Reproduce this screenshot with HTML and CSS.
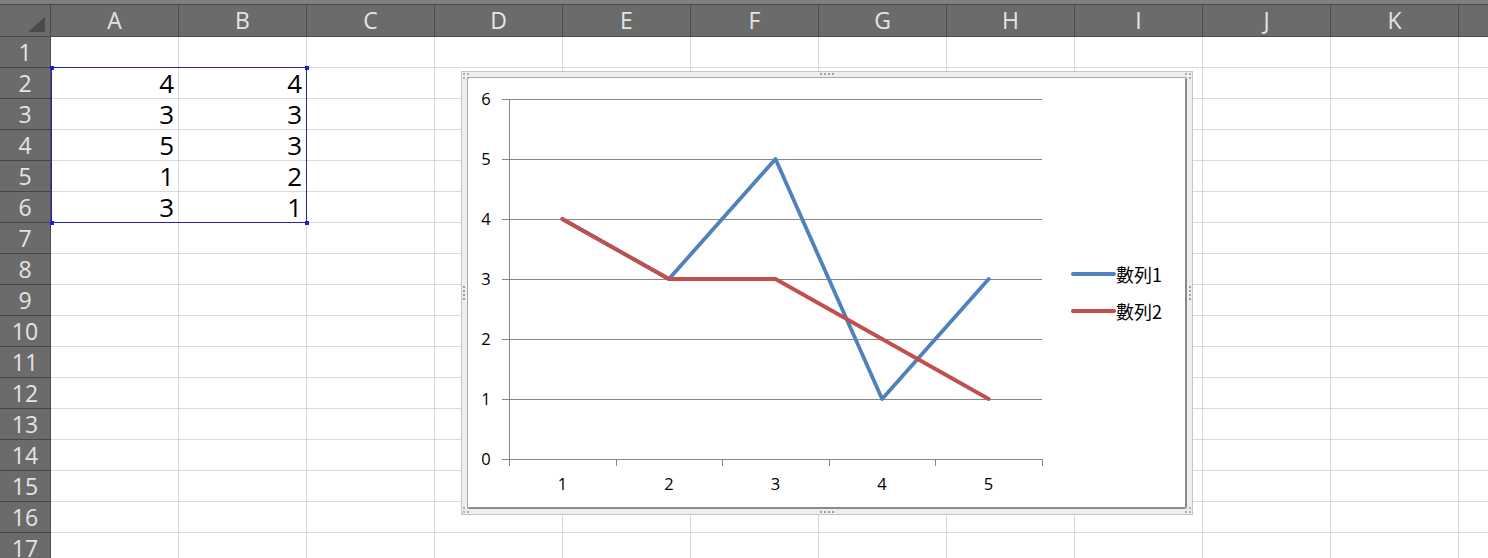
FILE: index.html
```html
<!DOCTYPE html>
<html>
<head>
<meta charset="utf-8">
<link rel="stylesheet" href="styles.css">
</head>
<body>
<div class="app">
  <div class="topstrip"></div>
  <div class="sheet">
    <div class="corner"><svg width="50" height="31" viewBox="0 0 50 31"><polygon points="45,12 45,27 28,27" fill="#4a4a4a"/></svg></div>
    <div class="colh">A</div><div class="colh">B</div><div class="colh">C</div><div class="colh">D</div><div class="colh">E</div><div class="colh">F</div><div class="colh">G</div><div class="colh">H</div><div class="colh">I</div><div class="colh">J</div><div class="colh">K</div><div class="colh">L</div>

    <div class="rowh">1</div><div class="cell"></div><div class="cell"></div><div class="cell"></div><div class="cell"></div><div class="cell"></div><div class="cell"></div><div class="cell"></div><div class="cell"></div><div class="cell"></div><div class="cell"></div><div class="cell"></div><div class="cell"></div>
    <div class="rowh">2</div><div class="cell num">4</div><div class="cell num">4</div><div class="cell"></div><div class="cell"></div><div class="cell"></div><div class="cell"></div><div class="cell"></div><div class="cell"></div><div class="cell"></div><div class="cell"></div><div class="cell"></div><div class="cell"></div>
    <div class="rowh">3</div><div class="cell num">3</div><div class="cell num">3</div><div class="cell"></div><div class="cell"></div><div class="cell"></div><div class="cell"></div><div class="cell"></div><div class="cell"></div><div class="cell"></div><div class="cell"></div><div class="cell"></div><div class="cell"></div>
    <div class="rowh">4</div><div class="cell num">5</div><div class="cell num">3</div><div class="cell"></div><div class="cell"></div><div class="cell"></div><div class="cell"></div><div class="cell"></div><div class="cell"></div><div class="cell"></div><div class="cell"></div><div class="cell"></div><div class="cell"></div>
    <div class="rowh">5</div><div class="cell num">1</div><div class="cell num">2</div><div class="cell"></div><div class="cell"></div><div class="cell"></div><div class="cell"></div><div class="cell"></div><div class="cell"></div><div class="cell"></div><div class="cell"></div><div class="cell"></div><div class="cell"></div>
    <div class="rowh">6</div><div class="cell num">3</div><div class="cell num">1</div><div class="cell"></div><div class="cell"></div><div class="cell"></div><div class="cell"></div><div class="cell"></div><div class="cell"></div><div class="cell"></div><div class="cell"></div><div class="cell"></div><div class="cell"></div>
    <div class="rowh">7</div><div class="cell"></div><div class="cell"></div><div class="cell"></div><div class="cell"></div><div class="cell"></div><div class="cell"></div><div class="cell"></div><div class="cell"></div><div class="cell"></div><div class="cell"></div><div class="cell"></div><div class="cell"></div>
    <div class="rowh">8</div><div class="cell"></div><div class="cell"></div><div class="cell"></div><div class="cell"></div><div class="cell"></div><div class="cell"></div><div class="cell"></div><div class="cell"></div><div class="cell"></div><div class="cell"></div><div class="cell"></div><div class="cell"></div>
    <div class="rowh">9</div><div class="cell"></div><div class="cell"></div><div class="cell"></div><div class="cell"></div><div class="cell"></div><div class="cell"></div><div class="cell"></div><div class="cell"></div><div class="cell"></div><div class="cell"></div><div class="cell"></div><div class="cell"></div>
    <div class="rowh">10</div><div class="cell"></div><div class="cell"></div><div class="cell"></div><div class="cell"></div><div class="cell"></div><div class="cell"></div><div class="cell"></div><div class="cell"></div><div class="cell"></div><div class="cell"></div><div class="cell"></div><div class="cell"></div>
    <div class="rowh">11</div><div class="cell"></div><div class="cell"></div><div class="cell"></div><div class="cell"></div><div class="cell"></div><div class="cell"></div><div class="cell"></div><div class="cell"></div><div class="cell"></div><div class="cell"></div><div class="cell"></div><div class="cell"></div>
    <div class="rowh">12</div><div class="cell"></div><div class="cell"></div><div class="cell"></div><div class="cell"></div><div class="cell"></div><div class="cell"></div><div class="cell"></div><div class="cell"></div><div class="cell"></div><div class="cell"></div><div class="cell"></div><div class="cell"></div>
    <div class="rowh">13</div><div class="cell"></div><div class="cell"></div><div class="cell"></div><div class="cell"></div><div class="cell"></div><div class="cell"></div><div class="cell"></div><div class="cell"></div><div class="cell"></div><div class="cell"></div><div class="cell"></div><div class="cell"></div>
    <div class="rowh">14</div><div class="cell"></div><div class="cell"></div><div class="cell"></div><div class="cell"></div><div class="cell"></div><div class="cell"></div><div class="cell"></div><div class="cell"></div><div class="cell"></div><div class="cell"></div><div class="cell"></div><div class="cell"></div>
    <div class="rowh">15</div><div class="cell"></div><div class="cell"></div><div class="cell"></div><div class="cell"></div><div class="cell"></div><div class="cell"></div><div class="cell"></div><div class="cell"></div><div class="cell"></div><div class="cell"></div><div class="cell"></div><div class="cell"></div>
    <div class="rowh">16</div><div class="cell"></div><div class="cell"></div><div class="cell"></div><div class="cell"></div><div class="cell"></div><div class="cell"></div><div class="cell"></div><div class="cell"></div><div class="cell"></div><div class="cell"></div><div class="cell"></div><div class="cell"></div>
    <div class="rowh">17</div><div class="cell"></div><div class="cell"></div><div class="cell"></div><div class="cell"></div><div class="cell"></div><div class="cell"></div><div class="cell"></div><div class="cell"></div><div class="cell"></div><div class="cell"></div><div class="cell"></div><div class="cell"></div>
  </div>

  <div class="selection">
    <span class="handle h-tl"></span><span class="handle h-tr"></span><span class="handle h-bl"></span><span class="handle h-br"></span>
  </div>

  <div class="chart">
    <span class="grip grip-top"></span><span class="grip grip-bottom"></span><span class="grip grip-left"></span><span class="grip grip-right"></span>
    <span class="cgrip cg-tl"></span><span class="cgrip cg-tr"></span><span class="cgrip cg-bl"></span><span class="cgrip cg-br"></span>
    <div class="chart-inner">
      <svg class="plot" width="717" height="429" viewBox="468 78 717 429">
        <g stroke="#868686" stroke-width="1" shape-rendering="crispEdges">
          <line x1="502" y1="99.5" x2="1042" y2="99.5"/>
          <line x1="502" y1="159.5" x2="1042" y2="159.5"/>
          <line x1="502" y1="219.5" x2="1042" y2="219.5"/>
          <line x1="502" y1="279.5" x2="1042" y2="279.5"/>
          <line x1="502" y1="339.5" x2="1042" y2="339.5"/>
          <line x1="502" y1="399.5" x2="1042" y2="399.5"/>
          <line x1="502" y1="459.5" x2="1043" y2="459.5"/>
          <line x1="509.5" y1="99" x2="509.5" y2="466"/>
          <line x1="616.5" y1="459" x2="616.5" y2="466"/>
          <line x1="722.5" y1="459" x2="722.5" y2="466"/>
          <line x1="829.5" y1="459" x2="829.5" y2="466"/>
          <line x1="935.5" y1="459" x2="935.5" y2="466"/>
          <line x1="1042.5" y1="459" x2="1042.5" y2="466"/>
        </g>
        <g class="axis-text" text-anchor="middle">
          <text x="486" y="104.5">6</text>
          <text x="486" y="164.5">5</text>
          <text x="486" y="224.5">4</text>
          <text x="486" y="284.5">3</text>
          <text x="486" y="344.5">2</text>
          <text x="486" y="404.5">1</text>
          <text x="486" y="464.5">0</text>
          <text x="562.5" y="489.5">1</text>
          <text x="669" y="489.5">2</text>
          <text x="775.5" y="489.5">3</text>
          <text x="882" y="489.5">4</text>
          <text x="988.5" y="489.5">5</text>
        </g>
        <polyline points="562.3,219 668.9,279 775.5,159 882.1,399 988.7,279" fill="none" stroke="#4f81bd" stroke-width="3.8" stroke-linejoin="round" stroke-linecap="round"/>
        <polyline points="562.3,219 668.9,279 775.5,279 882.1,339 988.7,399" fill="none" stroke="#c0504d" stroke-width="3.8" stroke-linejoin="round" stroke-linecap="round"/>
        <line x1="1073" y1="274" x2="1114" y2="274" stroke="#4f81bd" stroke-width="4" stroke-linecap="round"/>
        <line x1="1073" y1="311" x2="1114" y2="311" stroke="#c0504d" stroke-width="4" stroke-linecap="round"/>
        <text class="legend-text" x="1116" y="281.5">數列1</text>
        <text class="legend-text" x="1116" y="318.5">數列2</text>
      </svg>
    </div>
  </div>
</div>
</body>
</html>
```

FILE: styles.css
```css
html, body {
  margin: 0;
  padding: 0;
  background: #ffffff;
}
body {
  width: 1488px;
  height: 558px;
  overflow: hidden;
  font-family: "Open Sans", "Noto Sans", sans-serif;
}
.app {
  position: relative;
  width: 1488px;
  height: 558px;
  overflow: hidden;
}
.topstrip {
  height: 5px;
  box-sizing: border-box;
  background: #7f7f7f;
  border-bottom: 1px solid #474747;
}
.sheet {
  display: grid;
  grid-template-columns: 51px repeat(12, 128px);
  grid-template-rows: 32px repeat(17, 31px);
  width: max-content;
}
.corner {
  box-sizing: border-box;
  background: #6b6b6b;
  border-right: 1px solid #4a4a4a;
  border-bottom: 1px solid #4a4a4a;
}
.corner svg {
  display: block;
}
.colh {
  box-sizing: border-box;
  background: #6b6b6b;
  border-right: 1px solid #4e4e4e;
  border-bottom: 1px solid #4a4a4a;
  color: #e4e4e4;
  font-size: 23px;
  line-height: 31px;
  text-align: center;
}
.rowh {
  box-sizing: border-box;
  background: #6b6b6b;
  border-right: 1px solid #4a4a4a;
  border-bottom: 1px solid #454545;
  color: #e4e4e4;
  font-size: 23px;
  line-height: 30px;
  text-align: center;
}
.cell {
  box-sizing: border-box;
  border-right: 1px solid #dadada;
  border-bottom: 1px solid #dadada;
  background: #ffffff;
}
.num {
  text-align: right;
  padding-right: 4px;
  font-size: 26px;
  line-height: 30px;
  color: #000000;
}
.selection {
  position: absolute;
  left: 51px;
  top: 67px;
  width: 256px;
  height: 156px;
  box-sizing: border-box;
  border: 1px solid #2424a8;
}
.handle {
  position: absolute;
  width: 4px;
  height: 4px;
  background: #1c1cd0;
}
.h-tl { left: -2px; top: -2px; }
.h-tr { right: -3px; top: -2px; }
.h-bl { left: -2px; bottom: -3px; }
.h-br { right: -3px; bottom: -3px; }

.chart {
  position: absolute;
  left: 461px;
  top: 71px;
  width: 732px;
  height: 444px;
  box-sizing: border-box;
  border: 1px solid #c4c4c4;
  background: #eeeeee;
  padding: 5px;
}
.chart-inner {
  box-sizing: border-box;
  width: 100%;
  height: 100%;
  background: #ffffff;
  border-left: 1px solid #a8a8a8;
  border-top: 1px solid #a8a8a8;
  border-right: 2px solid #8a8a8a;
  border-bottom: 2px solid #8a8a8a;
}
.plot {
  display: block;
}
.axis-text {
  font-family: "Open Sans", "Noto Sans", sans-serif;
  font-size: 16.5px;
  fill: #000000;
}
.legend-text {
  font-family: "Noto Sans CJK TC", "Noto Sans", sans-serif;
  font-size: 18px;
  fill: #000000;
}
.grip {
  position: absolute;
  background-image: radial-gradient(circle, #a0a0a0 0.9px, transparent 1.1px);
}
.grip-top {
  left: 357px;
  top: 0px;
  width: 16px;
  height: 4px;
  background-size: 4px 4px;
}
.grip-bottom {
  left: 357px;
  bottom: 0px;
  width: 16px;
  height: 4px;
  background-size: 4px 4px;
}
.grip-left {
  left: 0px;
  top: 213px;
  width: 4px;
  height: 16px;
  background-size: 4px 4px;
}
.grip-right {
  right: 0px;
  top: 213px;
  width: 4px;
  height: 16px;
  background-size: 4px 4px;
}
.cgrip {
  position: absolute;
  width: 8px;
  height: 8px;
  background-image: radial-gradient(circle, #b0b0b0 0.9px, transparent 1.1px);
  background-size: 4px 4px;
}
.cg-tl { left: 0; top: 0; }
.cg-tr { right: 0; top: 0; }
.cg-bl { left: 0; bottom: 0; }
.cg-br { right: 0; bottom: 0; }
```
